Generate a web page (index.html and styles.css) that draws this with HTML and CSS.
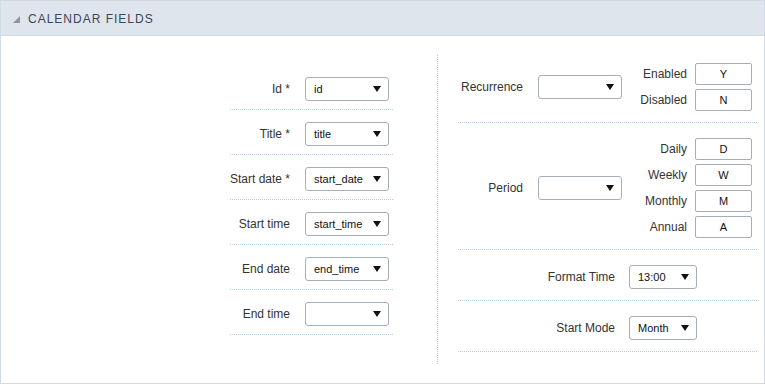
FILE: index.html
```html
<!DOCTYPE html>
<html lang="en">
<head>
  <meta charset="UTF-8">
  <title>Calendar Fields</title>
  <link rel="stylesheet" href="styles.css">
</head>
<body>

  <div class="panel">
    <div class="panel-header">
      <span class="toggle"></span>
      <span class="panel-title">CALENDAR FIELDS</span>
    </div>

    <div class="panel-body">
      <div class="col-left">
        <div class="field-list">
          <div class="field">
            <label class="field-label">Id *</label>
            <div class="select"><span>id</span><i class="arrow"></i></div>
          </div>
          <div class="field">
            <label class="field-label">Title *</label>
            <div class="select"><span>title</span><i class="arrow"></i></div>
          </div>
          <div class="field">
            <label class="field-label">Start date *</label>
            <div class="select"><span>start_date</span><i class="arrow"></i></div>
          </div>
          <div class="field">
            <label class="field-label">Start time</label>
            <div class="select"><span>start_time</span><i class="arrow"></i></div>
          </div>
          <div class="field">
            <label class="field-label">End date</label>
            <div class="select"><span>end_time</span><i class="arrow"></i></div>
          </div>
          <div class="field">
            <label class="field-label">End time</label>
            <div class="select"><span></span><i class="arrow"></i></div>
          </div>
        </div>
      </div>

      <div class="divider"></div>

      <div class="col-right">
        <div class="opt-row">
          <label class="opt-label">Recurrence</label>
          <div class="select"><span></span><i class="arrow"></i></div>
          <div class="values">
            <div class="value"><span class="value-label">Enabled</span><span class="box">Y</span></div>
            <div class="value"><span class="value-label">Disabled</span><span class="box">N</span></div>
          </div>
        </div>

        <div class="opt-row">
          <label class="opt-label">Period</label>
          <div class="select"><span></span><i class="arrow"></i></div>
          <div class="values">
            <div class="value"><span class="value-label">Daily</span><span class="box">D</span></div>
            <div class="value"><span class="value-label">Weekly</span><span class="box">W</span></div>
            <div class="value"><span class="value-label">Monthly</span><span class="box">M</span></div>
            <div class="value"><span class="value-label">Annual</span><span class="box">A</span></div>
          </div>
        </div>

        <div class="opt-row opt-row-end">
          <label class="end-label">Format Time</label>
          <div class="select select-small"><span>13:00</span><i class="arrow"></i></div>
        </div>

        <div class="opt-row opt-row-end">
          <label class="end-label">Start Mode</label>
          <div class="select select-small"><span>Month</span><i class="arrow"></i></div>
        </div>
      </div>
    </div>
  </div>

</body>
</html>
```

FILE: styles.css
```css
html, body {
  margin: 0;
  height: 100%;
  background: #fff;
  font-family: "Liberation Sans", Arial, sans-serif;
  font-size: 12px;
  color: #333;
}

.panel {
  box-sizing: border-box;
  height: 384px;
  border: 1px solid #d0dce5;
  border-top: none;
  display: flex;
  flex-direction: column;
}

.panel-header {
  height: 34px;
  background: #dfe5ec;
  border-top: 1px solid #cfdae2;
  border-bottom: 1px solid #cfdae2;
  display: flex;
  align-items: center;
  padding-left: 12px;
}

.toggle {
  width: 0;
  height: 0;
  border-left: 7px solid transparent;
  border-bottom: 7px solid #8d98a5;
  margin-right: 8px;
  margin-top: 2px;
}

.panel-title {
  color: #3b4658;
  font-size: 12px;
  letter-spacing: 1px;
  padding-top: 1px;
}

.panel-body {
  flex: 1;
  display: flex;
  padding-top: 12px;
}

.col-left {
  width: 436px;
  box-sizing: border-box;
  padding-right: 44px;
  display: flex;
  justify-content: flex-end;
  align-items: flex-start;
}

.field-list {
  width: 163px;
  margin-top: 17px;
}

.field {
  display: flex;
  align-items: center;
  padding: 12px 0 8px;
  border-bottom: 1px dotted #b3cde3;
}

.field-label {
  width: 60px;
  text-align: right;
  white-space: nowrap;
  margin-right: 15px;
}

.select {
  box-sizing: border-box;
  width: 84px;
  height: 24px;
  border: 1px solid #a7aeb6;
  border-radius: 3px;
  background: #fff;
  display: flex;
  align-items: center;
  justify-content: space-between;
  padding: 0 7px 0 8px;
  color: #111;
  font-size: 11px;
  flex-shrink: 0;
}

.select-small {
  width: 68px;
}

.arrow {
  width: 0;
  height: 0;
  border-left: 4px solid transparent;
  border-right: 4px solid transparent;
  border-top: 6px solid #111;
}

.divider {
  width: 0;
  border-left: 1px dotted #b3cde3;
  height: 309px;
  margin-top: 7px;
}

.col-right {
  flex: 1;
  padding: 0 7px 0 20px;
}

.opt-row {
  display: flex;
  align-items: center;
  padding: 15px 0 11px;
  border-bottom: 1px dotted #b3cde3;
}

.opt-row-end {
  justify-content: flex-end;
  padding-right: 60px;
}

.opt-label {
  width: 65px;
  text-align: right;
  margin-right: 15px;
}

.end-label {
  margin-right: 14px;
}

.values {
  display: flex;
  flex-direction: column;
  gap: 4px;
}

.value {
  display: flex;
  align-items: center;
}

.value-label {
  width: 65px;
  text-align: right;
  margin-right: 8px;
}

.box {
  box-sizing: border-box;
  width: 57px;
  height: 22px;
  border: 1px solid #a7aeb6;
  border-radius: 2px;
  display: flex;
  align-items: center;
  justify-content: center;
  color: #111;
  font-size: 11px;
}
```
